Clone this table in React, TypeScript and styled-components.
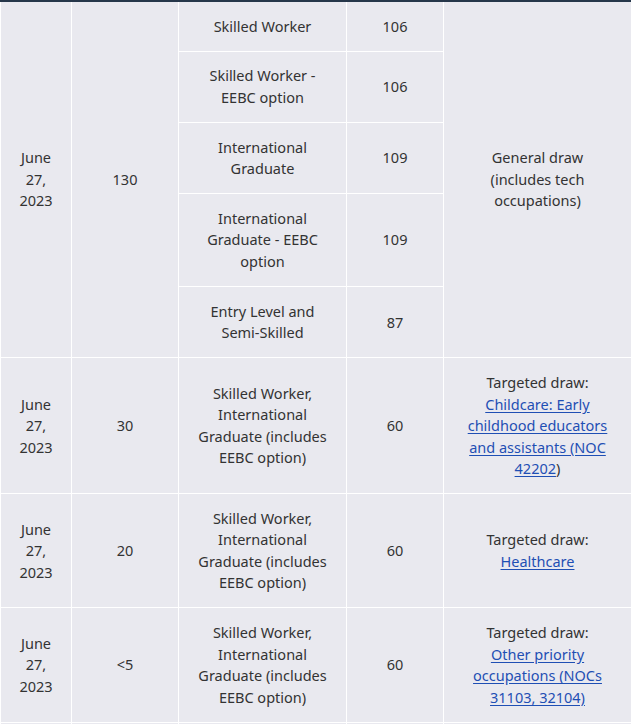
import React from 'react'
import styled, { createGlobalStyle } from 'styled-components'

const GlobalStyle = createGlobalStyle`
    html, body {
        margin: 0;
        padding: 0;
        background: #ffffff;
    }
    body {
        font-family: 'Noto Sans', 'Open Sans', sans-serif;
        color: #333333;
    }
`

const colors = {
    cell: '#e9e9ef',
    rule: '#ffffff',
    navy: '#26374a',
    text: '#333333',
    link: '#1f4fb4',
}

const Table = styled.table`
    width: 631px;
    table-layout: fixed;
    border-collapse: collapse;
    font-size: 14.5px;
    line-height: 21.5px;
    color: ${colors.text};
`

const Row = styled.tr<{ first?: boolean }>`
    & > td {
        border-top: ${(props) =>
            props.first ? `2px solid ${colors.navy}` : `1px solid ${colors.rule}`};
    }
`

const Cell = styled.td<{ wide?: boolean }>`
    background-color: ${colors.cell};
    border: 1px solid ${colors.rule};
    padding: 13.65px ${(props) => (props.wide ? '21.5px' : '14px')};
    text-align: center;
    vertical-align: middle;
`

const Link = styled.a`
    color: ${colors.link};
    text-decoration: underline;
    text-underline-offset: 2px;
`

interface Stream {
    name: string
    score: number
}

interface Draw {
    date: string
    invitations: string
    streams: Stream[]
    note: React.ReactNode
}

const draws: Draw[] = [
    {
        date: 'June 27, 2023',
        invitations: '130',
        streams: [
            { name: 'Skilled Worker', score: 106 },
            { name: 'Skilled Worker - EEBC option', score: 106 },
            { name: 'International Graduate', score: 109 },
            { name: 'International Graduate - EEBC option', score: 109 },
            { name: 'Entry Level and Semi-Skilled', score: 87 },
        ],
        note: 'General draw (includes tech occupations)',
    },
    {
        date: 'June 27, 2023',
        invitations: '30',
        streams: [
            {
                name: 'Skilled Worker, International Graduate (includes EEBC option)',
                score: 60,
            },
        ],
        note: (
            <>
                Targeted draw:{' '}
                <Link href="#">
                    Childcare: Early childhood educators and assistants (NOC
                    42202
                </Link>
                )
            </>
        ),
    },
    {
        date: 'June 27, 2023',
        invitations: '20',
        streams: [
            {
                name: 'Skilled Worker, International Graduate (includes EEBC option)',
                score: 60,
            },
        ],
        note: (
            <>
                Targeted draw: <Link href="#">Healthcare</Link>
            </>
        ),
    },
    {
        date: 'June 27, 2023',
        invitations: '<5',
        streams: [
            {
                name: 'Skilled Worker, International Graduate (includes EEBC option)',
                score: 60,
            },
        ],
        note: (
            <>
                Targeted draw:{' '}
                <Link href="#">Other priority occupations (NOCs 31103, 32104)</Link>
            </>
        ),
    },
    {
        date: 'June 20, 2023',
        invitations: '25',
        streams: [
            {
                name: 'Skilled Worker, International Graduate (includes EEBC option)',
                score: 60,
            },
        ],
        note: 'Targeted draw: Healthcare',
    },
]

export default function App(): JSX.Element {
    let rowIndex = 0
    return (
        <>
            <GlobalStyle />
            <Table>
                <colgroup>
                    <col style={{ width: 71 }} />
                    <col style={{ width: 107 }} />
                    <col style={{ width: 168 }} />
                    <col style={{ width: 97 }} />
                    <col style={{ width: 188 }} />
                </colgroup>
                <tbody>
                    {draws.map((draw, d) =>
                        draw.streams.map((stream, s) => {
                            const first = rowIndex++ === 0
                            const span = draw.streams.length
                            return (
                                <Row key={`${d}-${s}`} first={first}>
                                    {s === 0 && (
                                        <>
                                            <Cell rowSpan={span}>{draw.date}</Cell>
                                            <Cell rowSpan={span}>
                                                {draw.invitations}
                                            </Cell>
                                        </>
                                    )}
                                    <Cell>{stream.name}</Cell>
                                    <Cell>{stream.score}</Cell>
                                    {s === 0 && (
                                        <Cell rowSpan={span} wide>
                                            {draw.note}
                                        </Cell>
                                    )}
                                </Row>
                            )
                        })
                    )}
                </tbody>
            </Table>
        </>
    )
}
